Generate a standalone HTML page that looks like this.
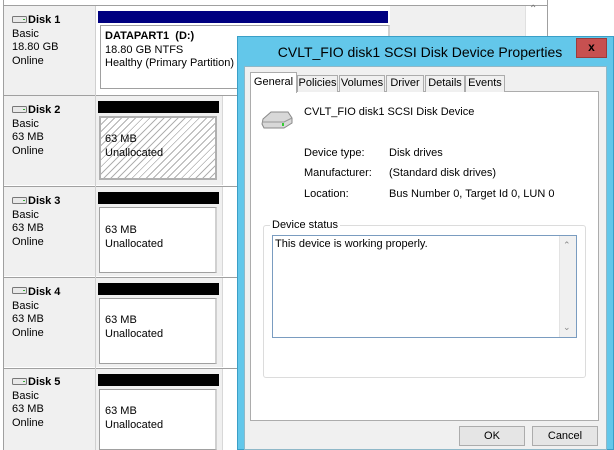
<!DOCTYPE html>
<html><head><meta charset="utf-8"><style>
*{margin:0;padding:0;box-sizing:border-box}
body{width:614px;height:450px;overflow:hidden;background:#fff;font-family:"Liberation Sans",sans-serif;font-size:11px;color:#000;position:relative}
.a{position:absolute}
.lbl{background:#f0f0f0}
.t{position:absolute;line-height:13.5px;font-size:11px}
.hat{background:repeating-linear-gradient(135deg,#fff 0 4px,#b0b0b0 4px 5px)}
.tab{position:absolute;top:75px;height:17px;border:1px solid #acacac;border-bottom:none;background:#f0f0f0;font-size:11px;line-height:15px;text-align:center}
.btn{position:absolute;top:426px;height:20px;border:1px solid #acacac;background:#e5e5e5;text-align:center;line-height:18px;font-size:11px}
</style></head><body>
<div class="a" style="left:3px;top:0;width:545px;height:450px;border-left:1px solid #a0a0a0;border-right:1px solid #a0a0a0;background:#fff"></div>
<div class="a" style="left:3px;top:5px;width:545px;height:1px;background:#a0a0a0"></div>
<div class="a" style="left:390px;top:6px;width:135px;height:444px;background:#f0f0f0"></div>
<div class="a" style="left:525px;top:6px;width:17px;height:444px;background:#fff;border-left:1px solid #e0e0e0"></div>
<div class="a" style="left:529px;top:4px;font-size:10px;color:#777">&#8963;</div>

<div class="a lbl" style="left:4px;top:6px;width:91px;height:89px"></div>
<div class="a lbl" style="left:4px;top:96px;width:91px;height:89px"></div>
<div class="a lbl" style="left:4px;top:187px;width:91px;height:89px"></div>
<div class="a lbl" style="left:4px;top:278px;width:91px;height:89px"></div>
<div class="a lbl" style="left:4px;top:369px;width:91px;height:81px"></div>
<div class="a" style="left:4px;top:95px;width:386px;height:1px;background:#a0a0a0"></div>
<div class="a" style="left:4px;top:186px;width:386px;height:1px;background:#a0a0a0"></div>
<div class="a" style="left:4px;top:277px;width:386px;height:1px;background:#a0a0a0"></div>
<div class="a" style="left:4px;top:368px;width:386px;height:1px;background:#a0a0a0"></div>
<div class="a" style="left:95px;top:6px;width:1px;height:444px;background:#d0d0d0"></div>

<svg class="a" style="left:0;top:0" width="100" height="450">
<g fill="#e8e8e8" stroke="#777"><rect x="12.5" y="16.5" width="14" height="6" rx="1"/><rect x="12.5" y="106.5" width="14" height="6" rx="1"/><rect x="12.5" y="197.5" width="14" height="6" rx="1"/><rect x="12.5" y="287.5" width="14" height="6" rx="1"/><rect x="12.5" y="378.5" width="14" height="6" rx="1"/></g>
<g fill="#3a3"><rect x="23" y="19" width="2" height="1"/><rect x="23" y="109" width="2" height="1"/><rect x="23" y="200" width="2" height="1"/><rect x="23" y="290" width="2" height="1"/><rect x="23" y="381" width="2" height="1"/></g>
</svg>
<div class="t" style="left:12px;top:14px"><span style="margin-left:16px;font-weight:bold">Disk 1</span><br>Basic<br>18.80 GB<br>Online</div>
<div class="t" style="left:12px;top:104px"><span style="margin-left:16px;font-weight:bold">Disk 2</span><br>Basic<br>63 MB<br>Online</div>
<div class="t" style="left:12px;top:195px"><span style="margin-left:16px;font-weight:bold">Disk 3</span><br>Basic<br>63 MB<br>Online</div>
<div class="t" style="left:12px;top:286px"><span style="margin-left:16px;font-weight:bold">Disk 4</span><br>Basic<br>63 MB<br>Online</div>
<div class="t" style="left:12px;top:376px"><span style="margin-left:16px;font-weight:bold">Disk 5</span><br>Basic<br>63 MB<br>Online</div>

<div class="a" style="left:98px;top:11px;width:290px;height:12px;background:#000080"></div>
<div class="a" style="left:100px;top:25px;width:290px;height:64px;border:1px solid #a0a0a0;border-right:2px solid #d0d0d0"></div>
<div class="t" style="left:105px;top:30px"><b>DATAPART1&nbsp; (D:)</b><br>18.80 GB NTFS<br>Healthy (Primary Partition)</div>

<div class="a" style="left:96px;top:96px;width:127px;height:89px;background:#f0f0f0;border-right:1px solid #d8d8d8"></div>
<div class="a" style="left:98px;top:101px;width:121px;height:12px;background:#000"></div>
<div class="a hat" style="left:99px;top:116px;width:118px;height:64px;border:2px solid #b0b0b0"></div>
<div class="t" style="left:105px;top:133px;background:transparent">63 MB<br>Unallocated</div>

<div class="a" style="left:96px;top:187px;width:127px;height:89px;background:#f0f0f0;border-right:1px solid #d8d8d8"></div>
<div class="a" style="left:98px;top:192px;width:121px;height:12px;background:#000"></div>
<div class="a" style="left:99px;top:207px;width:118px;height:66px;background:#fff;border:1px solid #a0a0a0;border-right:2px solid #d0d0d0"></div>
<div class="t" style="left:105px;top:224px">63 MB<br>Unallocated</div>

<div class="a" style="left:96px;top:278px;width:127px;height:89px;background:#f0f0f0;border-right:1px solid #d8d8d8"></div>
<div class="a" style="left:98px;top:283px;width:121px;height:12px;background:#000"></div>
<div class="a" style="left:99px;top:298px;width:118px;height:66px;background:#fff;border:1px solid #a0a0a0;border-right:2px solid #d0d0d0"></div>
<div class="t" style="left:105px;top:314px">63 MB<br>Unallocated</div>

<div class="a" style="left:96px;top:369px;width:127px;height:81px;background:#f0f0f0;border-right:1px solid #d8d8d8"></div>
<div class="a" style="left:98px;top:374px;width:121px;height:12px;background:#000"></div>
<div class="a" style="left:99px;top:389px;width:118px;height:61px;background:#fff;border:1px solid #a0a0a0;border-right:2px solid #d0d0d0"></div>
<div class="t" style="left:105px;top:405px">63 MB<br>Unallocated</div>

<div class="a" style="left:237px;top:36px;width:377px;height:414px;background:#63c7ea;border:1px solid #3a9fc7"></div>
<div class="a" style="left:244px;top:66px;width:363px;height:384px;background:#f0f0f0;border:1px solid #8fb8c8"></div>
<div class="a" style="left:244px;top:37px;width:352px;height:30px;text-align:center;font-size:14px;line-height:30px;color:#000">CVLT_FIO disk1 SCSI Disk Device Properties</div>
<div class="a" style="left:576px;top:38px;width:31px;height:20px;background:#c75050;border:1px solid #9c3b3b;color:#000;font-weight:bold;font-size:12px;text-align:center;line-height:17px">x</div>

<div class="a" style="left:250px;top:91px;width:349px;height:330px;background:#fff;border:1px solid #acacac"></div>
<div class="tab" style="left:297px;width:41px">Policies</div>
<div class="tab" style="left:339px;width:46px">Volumes</div>
<div class="tab" style="left:386px;width:38px">Driver</div>
<div class="tab" style="left:425px;width:40px">Details</div>
<div class="tab" style="left:465px;width:40px">Events</div>
<div class="tab" style="left:250px;top:72px;width:47px;height:21px;background:#fff;line-height:18px;border-color:#acacac">General</div>

<svg class="a" style="left:260px;top:108px" width="36" height="22">
<path d="M3 11 L11 4 L28 4 L32 10 L32 15 L24 20 L4 20 L2 16 Z" fill="#d8d8d8" stroke="#888"/>
<path d="M2 14 L24 14 L32 10" fill="none" stroke="#999"/>
<rect x="22" y="15" width="2" height="3" fill="#3c3"/>
</svg>
<div class="t" style="left:304px;top:106px">CVLT_FIO disk1 SCSI Disk Device</div>
<div class="t" style="left:304px;top:147px">Device type:</div>
<div class="t" style="left:389px;top:147px">Disk drives</div>
<div class="t" style="left:304px;top:167px">Manufacturer:</div>
<div class="t" style="left:389px;top:167px">(Standard disk drives)</div>
<div class="t" style="left:304px;top:188px">Location:</div>
<div class="t" style="left:389px;top:188px">Bus Number 0, Target Id 0, LUN 0</div>

<div class="a" style="left:263px;top:225px;width:323px;height:153px;border:1px solid #dcdcdc;border-radius:3px"></div>
<div class="t" style="left:270px;top:219px;background:#fff;padding:0 2px">Device status</div>
<div class="a" style="left:272px;top:235px;width:305px;height:103px;border:1px solid #7a9cc0;background:#fff"></div>
<div class="a" style="left:559px;top:236px;width:17px;height:101px;background:#f0f0f0;border-left:1px solid #e3e3e3"></div>
<div class="a" style="left:563px;top:240px;font-size:9px;color:#888">&#8963;</div>
<div class="a" style="left:563px;top:322px;font-size:9px;color:#888">&#8964;</div>
<div class="t" style="left:275px;top:238px">This device is working properly.</div>

<div class="btn" style="left:459px;width:66px">OK</div>
<div class="btn" style="left:532px;width:66px">Cancel</div>
</body></html>
